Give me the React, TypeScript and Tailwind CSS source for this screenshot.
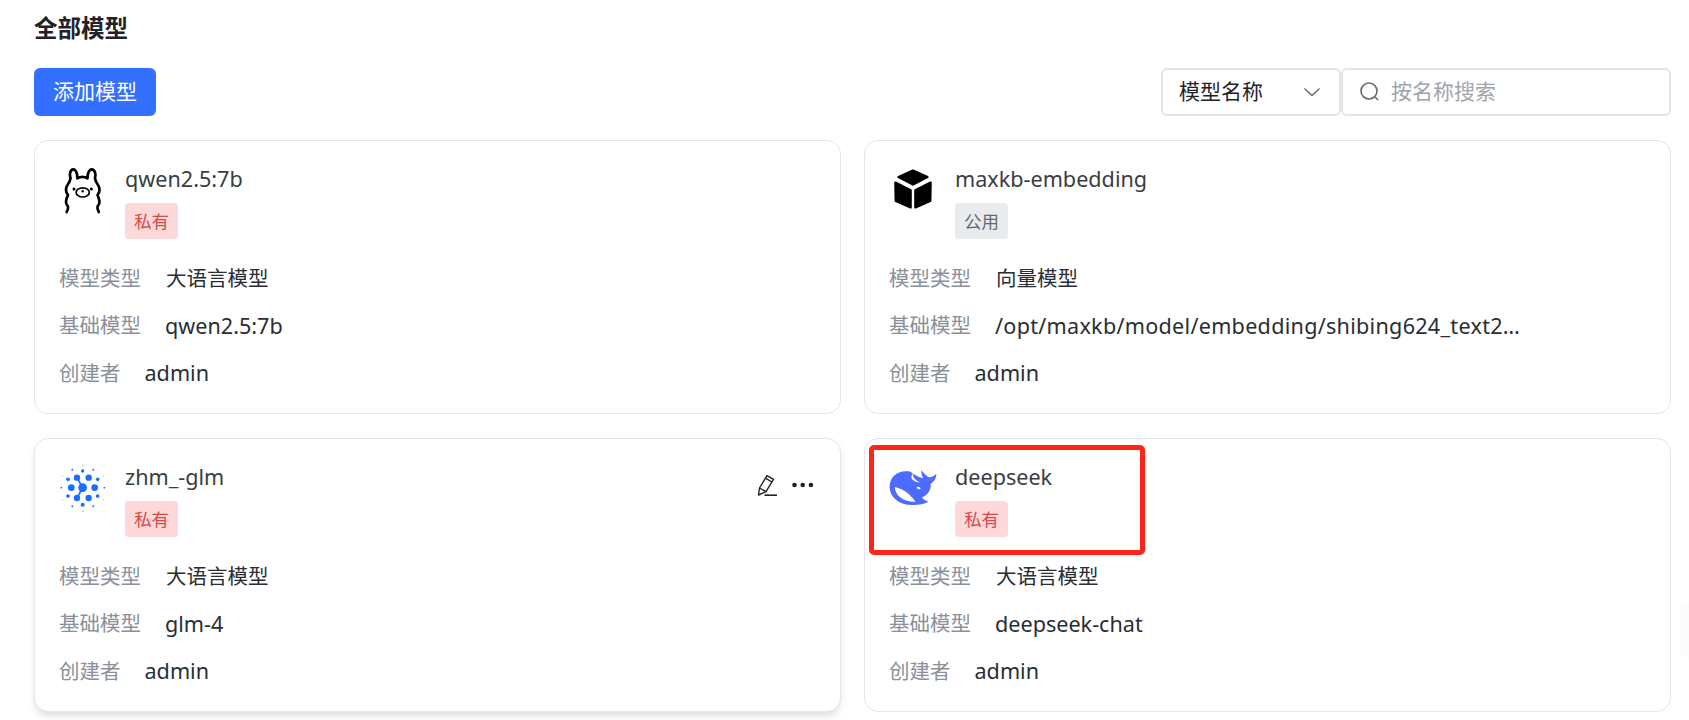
const FONT = "font-['Noto_Sans','Noto_Sans_CJK_SC',sans-serif]"

function Llama() {
  return (
    <g transform="translate(4,3)" fill="none" stroke="#000" strokeWidth="2.7" strokeLinecap="round" strokeLinejoin="round">
      <path d="M3.7 47 Q5.5 44 5 41.7 Q2.8 39 3 36.7 Q3.4 33 5 30 Q3 27.5 3 25 Q3 22 4.5 20 Q7 17 7.5 13.3 C6 9 7.5 4.5 10.3 4.3 C13 4.5 14.6 9 14.3 13.3 Q19.5 10.5 24.5 13.3 C24.3 9 26 4.5 28.7 4.3 C31.5 4.5 33.5 9 32 13.3 Q32.5 17 35 20 Q36.5 22 36.5 25 Q36.5 27.5 34.5 30 Q36 33 36.5 36.7 Q36.7 39 34.5 41.7 Q34 44 35.8 47" />
      <ellipse cx="19.7" cy="27.4" rx="6.6" ry="4.6" strokeWidth="1.7" />
      <circle cx="19.7" cy="26.2" r="1.2" fill="#000" stroke="none" />
      <circle cx="11" cy="24" r="1.5" fill="#000" stroke="none" />
      <circle cx="28.4" cy="24" r="1.5" fill="#000" stroke="none" />
    </g>
  )
}

function Cube() {
  return (
    <g transform="translate(5,7)" fill="#000" stroke="#000" strokeWidth="2.4" strokeLinejoin="round">
      <path d="M19 1.5 L33.5 8 L19 15.5 L4.5 8 Z" />
      <path d="M1.4 13.6 L16.6 21.2 L16.6 38.4 L1.8 32 Z" />
      <path d="M36.6 13.6 L21.4 21.2 L21.4 38.4 L36.2 32 Z" />
    </g>
  )
}

function Zhipu() {
  const dots = [
    [129, 42, 1.6], [160, 56, 3], [97, 56, 3], [190, 76, 1.4], [67, 76, 1.4], [193, 110, 2.6], [64, 110, 2.6],
    [190, 146, 1.4], [67, 146, 1.4], [160, 166, 3], [97, 166, 3], [129, 181, 1.6],
    [128, 60, 5], [173, 85, 5.5], [84, 85, 5.5], [173, 135, 5.5], [84, 135, 5.5], [128, 161, 6],
    [111, 80, 9.5], [146, 80, 9.5], [94, 110, 10], [164, 110, 10], [111, 141, 9.5], [146, 141, 9.5],
    [128, 110, 13],
  ]
  return (
    <g transform="translate(-19,-9) scale(0.3333)" fill="#1a6dff">
      {dots.map(([x, y, r]) => (
        <circle key={`${x}-${y}`} cx={x} cy={y} r={r} />
      ))}
      <path d="M111 80 L128 110 L111 141" fill="none" stroke="#1a6dff" strokeWidth="5" />
    </g>
  )
}

function Whale() {
  return (
    <g transform="translate(-29,-29) scale(0.3333)">
      <path
        fill="#4d6bfe"
        d="M152 122 C112 114 87 140 89 170 C91 202 122 224 160 222 C176 221 194 219 205 212 C196 209 190 206 186 199 C204 191 214 176 212 158 C222 152 229 142 229 128 C222 136 212 140 205 138 C198 134 190 126 184 118 C183 128 186 136 190 142 C176 138 162 132 152 122 Z"
      />
      <path fill="#fff" d="M104 168 C126 172 150 188 166 212 C132 213 106 196 104 168 Z" />
      <path fill="#fff" d="M158 127 C158 140 168 150 182 155 C172 155 162 151 156 145 C153 140 154 133 158 127 Z" />
      <ellipse cx="176" cy="171" rx="6" ry="3.5" fill="#fff" transform="rotate(20 176 171)" />
    </g>
  )
}

type Model = {
  name: string
  logo: React.ReactNode
  tag: string
  type: string
  base: string
  wide?: boolean
}

const models: Model[] = [
  { name: 'qwen2.5:7b', logo: <Llama />, tag: '私有', type: '大语言模型', base: 'qwen2.5:7b' },
  { name: 'maxkb-embedding', logo: <Cube />, tag: '公用', type: '向量模型', base: '/opt/maxkb/model/embedding/shibing624_text2…', wide: true },
  { name: 'zhm_-glm', logo: <Zhipu />, tag: '私有', type: '大语言模型', base: 'glm-4' },
  { name: 'deepseek', logo: <Whale />, tag: '私有', type: '大语言模型', base: 'deepseek-chat' },
]

function Row({ label, value, latin, wide }: { label: string; value: string; latin?: boolean; wide?: boolean }) {
  return (
    <div className="flex items-center h-[28px]">
      <span className={`shrink-0 text-[#8a8f99] ${latin ? 'mr-[24px]' : 'mr-[25px]'}`}>{label}</span>
      <span className={`whitespace-nowrap text-[#2a2d33] ${latin ? 'text-[21.6px]' : ''} ${wide ? 'tracking-[0.27px]' : ''}`}>{value}</span>
    </div>
  )
}

function ModelCard({ model, hovered, marked }: { model: Model; hovered?: boolean; marked?: boolean }) {
  return (
    <div className={`relative h-[274px] rounded-[14px] border border-[#e4e5ee] bg-white pl-[24px] pr-[24px] pt-[21px] ${hovered ? 'shadow-[0_5px_10px_-3px_rgba(31,35,41,0.22)]' : ''}`}>
      <div className="flex h-[82px]">
        <svg width="60" height="60" viewBox="0 0 60 60" className="mr-[6px] shrink-0">
          {model.logo}
        </svg>
        <div className="flex flex-col items-start pt-[3px]">
          <div className="h-[28px] text-[21.6px] leading-[28px] text-[#3a3d42]">{model.name}</div>
          <span className={`mt-[10px] flex h-[36px] w-[53px] items-center justify-center rounded-[4px] text-[17.5px] ${model.tag === '公用' ? 'bg-[#e9ebed] text-[#646a73]' : 'bg-[#fdd9d9] text-[#d9484a]'}`}>
            {model.tag}
          </span>
        </div>
        {hovered && (
          <svg width="60" height="24" viewBox="0 0 60 24" className="ml-auto mt-[14px] shrink-0">
            <g fill="none" stroke="#1f2329" strokeWidth="1.4" strokeLinejoin="round">
              <path d="M2.5 21 L3.5 14 L11 1.6 L17.5 5.4 L10 17.6 Z" />
              <path d="M3.5 14 L10 17.6" />
              <path d="M9.4 4.2 L15.9 8" />
              <path d="M8.5 21.2 H21" strokeWidth="1.6" />
            </g>
            <circle cx="38.5" cy="11" r="2.3" fill="#1f2329" />
            <circle cx="46.7" cy="11" r="2.3" fill="#1f2329" />
            <circle cx="54.9" cy="11" r="2.3" fill="#1f2329" />
          </svg>
        )}
      </div>
      <div className="mt-[20.5px] flex flex-col gap-[19.25px]">
        <Row label="模型类型" value={model.type} />
        <Row label="基础模型" value={model.base} latin wide={model.wide} />
        <Row label="创建者" value="admin" latin />
      </div>
      {marked && (
        <div className="absolute left-[4px] top-[6px] h-[110px] w-[276px] rounded-[5px] border-[5px] border-[#ff2418]" />
      )}
    </div>
  )
}

export default function App() {
  return (
    <div className={`relative h-[720px] w-full overflow-hidden bg-white pl-[34px] pr-[18px] text-[20.5px] ${FONT}`}>
      <h2 className="pt-[11px] text-[23.5px] font-bold leading-[34px] text-[#1f2329]">全部模型</h2>
      <div className="mt-[23px] flex items-center justify-between">
        <button className="h-[48px] w-[122px] rounded-[6px] bg-[#3370ff] text-[21px] text-white">添加模型</button>
        <div className="flex h-[48px] text-[21px]">
          <div className="flex w-[180px] items-center justify-between rounded-[6px] border-2 border-[#e3e4e8] pl-[16px] pr-[18px] text-[#1f2329]">
            <span>模型名称</span>
            <svg width="18" height="10" viewBox="0 0 18 10" fill="none" stroke="#646a73" strokeWidth="1.4">
              <path d="M1.5 1.5 L9 8.5 L16.5 1.5" />
            </svg>
          </div>
          <div className="flex w-[330px] items-center rounded-[6px] border-2 border-[#e3e4e8] pl-[16px]">
            <svg width="22" height="22" viewBox="0 0 22 22" fill="none" stroke="#646a73" strokeWidth="1.6" className="mr-[10px]">
              <circle cx="10" cy="10" r="8" />
              <path d="M16 16 L19 19" />
            </svg>
            <span className="text-[#a0a4ab]">按名称搜索</span>
          </div>
        </div>
      </div>
      <div className="mt-[24px] grid grid-cols-2 gap-x-[23px] gap-y-[24px]">
        <ModelCard model={models[0]} />
        <ModelCard model={models[1]} />
        <ModelCard model={models[2]} hovered />
        <ModelCard model={models[3]} marked />
      </div>
      <div className="absolute right-0 top-[603px] h-[54px] w-[9px] rounded-l-[6px] bg-[#fbfbfb]" />
    </div>
  )
}
